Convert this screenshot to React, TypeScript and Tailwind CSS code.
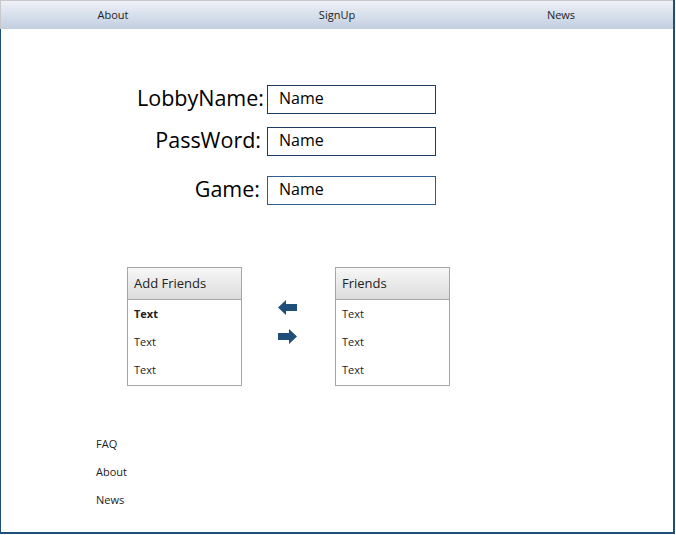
import React from "react";

function ArrowLeft() {
  return (
    <svg width="19" height="15" viewBox="0 0 19 15">
      <path d="M0 7.5 L8 0 L8 4 L19 4 L19 11 L8 11 L8 15 Z" fill="#1f4e79" />
    </svg>
  );
}

function ArrowRight() {
  return (
    <svg width="19" height="15" viewBox="0 0 19 15">
      <path d="M19 7.5 L11 0 L11 4 L0 4 L0 11 L11 11 L11 15 Z" fill="#1f4e79" />
    </svg>
  );
}

function ListBox({ title, items, boldFirst }: { title: string; items: string[]; boldFirst?: boolean }) {
  return (
    <div className="w-[115px] h-[119px] border border-[#a6a6a6] bg-white">
      <div className="h-[32px] flex items-center px-[6px] text-[13px] text-[#222] border-b border-[#a6a6a6] bg-gradient-to-b from-[#f7f7f7] to-[#dcdcdc]">
        {title}
      </div>
      <div className="flex flex-col">
        {items.map((t, i) => (
          <div
            key={i}
            className={`h-[28px] flex items-center px-[6px] text-[11px] text-[#222] ${boldFirst && i === 0 ? "font-bold" : ""}`}
          >
            {t}
          </div>
        ))}
      </div>
    </div>
  );
}

export default function App() {
  const fields = [
    { label: "LobbyName:", mt: "mt-[56px]", pr: "pr-[1px]", border: "border-[#1f3a5f]" },
    { label: "PassWord:", mt: "mt-[13px]", pr: "pr-[4px]", border: "border-[#1f3a5f]" },
    { label: "Game:", mt: "mt-[20px]", pr: "pr-[5px]", border: "border-[#2e5c8e]" },
  ];
  return (
    <div className="w-[676px] h-[535px] bg-white" style={{ fontFamily: '"Open Sans", "Noto Sans", sans-serif' }}>
      <div className="w-[675px] h-[534px] flex flex-col border-r-2 border-[#1f4e79]">
        <div className="h-[29px] grid grid-cols-3 items-center text-[11px] text-[#222] border-t border-l border-[#c8c8c8] bg-gradient-to-b from-[#eef1f7] to-[#c2cee0]">
          <div className="text-center">About</div>
          <div className="text-center">SignUp</div>
          <div className="text-center">News</div>
        </div>
        <div className="flex-1 flex flex-col border-l border-b-2 border-[#1f4e79]">
          {fields.map((f) => (
            <div key={f.label} className={`flex items-center ${f.mt}`}>
              <div className={`w-[264px] text-right text-[21.5px] leading-none text-black pb-[4px] ${f.pr}`}>{f.label}</div>
              <div
                className={`ml-[2px] w-[169px] h-[29px] border ${f.border} flex items-center pl-[11px] pb-[3px] text-[16px] text-black`}
              >
                Name
              </div>
            </div>
          ))}
          <div className="flex items-start mt-[62px] pl-[126px]">
            <ListBox title="Add Friends" items={["Text", "Text", "Text"]} boldFirst />
            <div className="ml-[36px] mt-[33px] flex flex-col gap-[14px]">
              <ArrowLeft />
              <ArrowRight />
            </div>
            <div className="ml-[38px]">
              <ListBox title="Friends" items={["Text", "Text", "Text"]} />
            </div>
          </div>
          <div className="mt-[44px] pl-[95px] flex flex-col text-[11px] text-[#222]">
            <div className="h-[28px] flex items-center">FAQ</div>
            <div className="h-[28px] flex items-center">About</div>
            <div className="h-[28px] flex items-center">News</div>
          </div>
        </div>
      </div>
    </div>
  );
}
